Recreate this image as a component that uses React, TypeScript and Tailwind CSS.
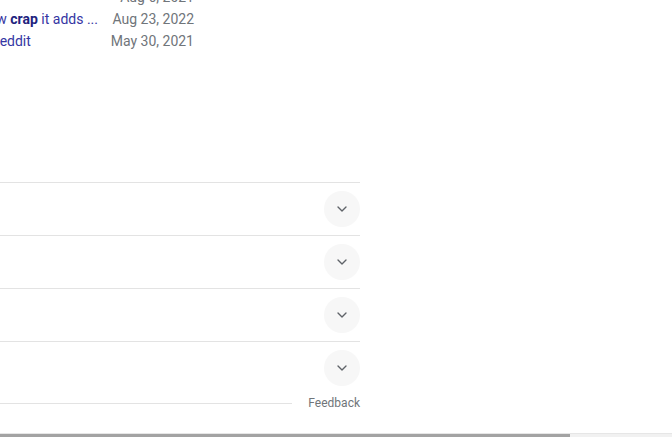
import { ChevronDown } from 'lucide-react'

const rows = [
  { lead: '', tail: 'Aug 6, 2021', clipEnd: false },
  { lead: '', tail: 'Aug 23, 2022', clipEnd: true },
  { lead: 'Reddit', tail: 'May 30, 2021', clipEnd: false },
]

export default function App() {
  return (
    <div className="flex h-[437px] w-[672px] flex-col overflow-hidden bg-white font-['Roboto',sans-serif]">
      {/* result snippet rows, top row partly scrolled off */}
      <div className="-mt-[14px] flex w-[194px] flex-col text-[14px] leading-[22px]">
        {rows.map((r, i) => (
          <div key={i} className="flex items-center">
            <div className="flex w-[98px] justify-end overflow-hidden whitespace-nowrap text-[#3535a3]">
              {r.clipEnd ? (
                <span>
                  how <b className="font-bold text-[#22227e]">crap</b> it adds ...
                </span>
              ) : (
                <span className="mr-auto -ml-[9px]">{r.lead}</span>
              )}
            </div>
            <span className="ml-auto whitespace-nowrap text-[#70757a]">{r.tail}</span>
          </div>
        ))}
      </div>

      {/* collapsed accordion */}
      <div className="mt-[130px] flex w-[360px] flex-col">
        {[0, 1, 2, 3].map((i) => (
          <div key={i} className="flex h-[53px] items-center justify-end border-t border-[#e3e3e3]">
            <div className="flex h-[36px] w-[36px] items-center justify-center rounded-full bg-[#f7f7f7]">
              <ChevronDown size={16} strokeWidth={2} className="text-[#5f6368]" />
            </div>
          </div>
        ))}
      </div>

      <div className="mt-[1px] flex w-[360px] items-center gap-[16px]">
        <div className="h-px flex-1 bg-[#e3e3e3]" />
        <span className="text-[12px] leading-[16px] text-[#70757a]">Feedback</span>
      </div>

      <div className="flex-1" />

      {/* horizontal scrollbar */}
      <div className="flex h-[4px] border-t border-[#e6e6e6] bg-[#f1f1f1]">
        <div className="w-[570px] bg-[#a3a3a3]" />
      </div>
    </div>
  )
}
